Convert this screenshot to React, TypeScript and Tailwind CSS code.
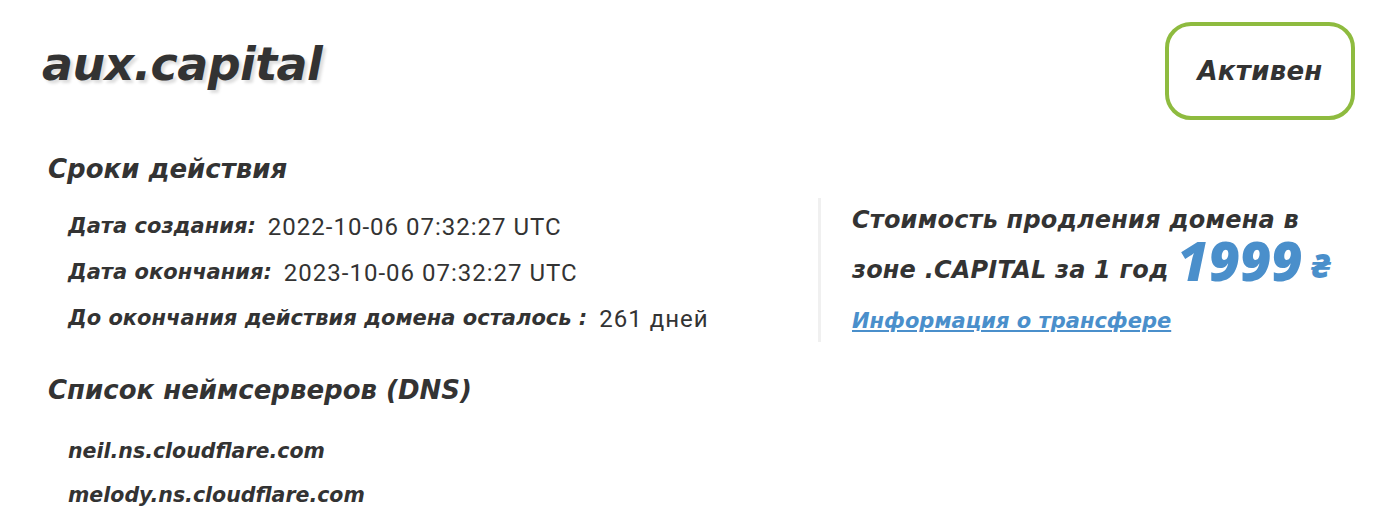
import React from "react";

const italic = "font-['DejaVu_Sans',sans-serif] italic";
const priceFont = "font-['Noto_Sans',sans-serif] italic";

const dates = [
  { label: "Дата создания:", value: "2022-10-06 07:32:27 UTC" },
  { label: "Дата окончания:", value: "2023-10-06 07:32:27 UTC" },
  { label: "До окончания действия домена осталось :", value: "261 дней" },
];

const nameservers = ["neil.ns.cloudflare.com", "melody.ns.cloudflare.com"];

export default function App() {
  return (
    <div className="w-[1398px] h-[524px] bg-white text-[#333333] overflow-hidden">
      <div className="flex justify-between items-start pl-[42px] pr-[43px] pt-[22px]">
        <h1
          className={`${italic} font-bold text-[46px] leading-none mt-[19px] tracking-[-0.6px] [text-shadow:3px_3px_3px_#dedede]`}
        >
          aux.capital
        </h1>
        <div className="w-[190px] h-[98px] rounded-[26px] border-[4px] border-[#8ebb3f] flex items-center justify-center">
          <span className={`${italic} font-bold text-[26px] tracking-[0.3px]`}>Активен</span>
        </div>
      </div>

      <div className="flex pl-[48px] mt-[31px]">
        <div className="w-[770px]">
          <h2 className={`${italic} font-bold text-[26px] leading-[36px]`}>Сроки действия</h2>
          <div className="flex flex-col gap-[10px] pl-[20px] mt-[22px]">
            {dates.map((d) => (
              <div key={d.label} className="flex items-center h-[36px]">
                <span className={`${italic} font-bold text-[21px]`}>{d.label}</span>
                <span className="font-['Roboto',sans-serif] text-[24px] tracking-[1px] ml-[12px]">{d.value}</span>
              </div>
            ))}
          </div>
        </div>

        <div className="mt-[47px] h-[144px] border-l-[3px] border-[#f0f0f0] pl-[31px]">
          <p className={`${italic} font-bold text-[24px] leading-[50px] w-[500px] -mt-[3px] tracking-[0.2px]`}>
            Стоимость продления домена в зоне .CAPITAL за 1 год{" "}
            <span className={`${priceFont} text-[#4a8fcb] font-black text-[54px] leading-[20px] align-[-3px] tracking-normal`}>
              1999
            </span>{" "}
            <span className={`${priceFont} text-[#4a8fcb] font-black text-[34px] leading-[20px]`}>₴</span>
          </p>
          <a href="#" className={`${italic} font-bold text-[21px] text-[#4a8fcb] underline block mt-[11px]`}>
            Информация о трансфере
          </a>
        </div>
      </div>

      <div className="pl-[48px] mt-[30px]">
        <h2 className={`${italic} font-bold text-[26px] leading-[36px]`}>Список неймсерверов (DNS)</h2>
        <div className="flex flex-col gap-[8px] pl-[20px] mt-[25px]">
          {nameservers.map((ns) => (
            <div key={ns} className={`${italic} font-bold text-[20.5px] h-[36px] flex items-center`}>
              {ns}
            </div>
          ))}
        </div>
      </div>
    </div>
  );
}
